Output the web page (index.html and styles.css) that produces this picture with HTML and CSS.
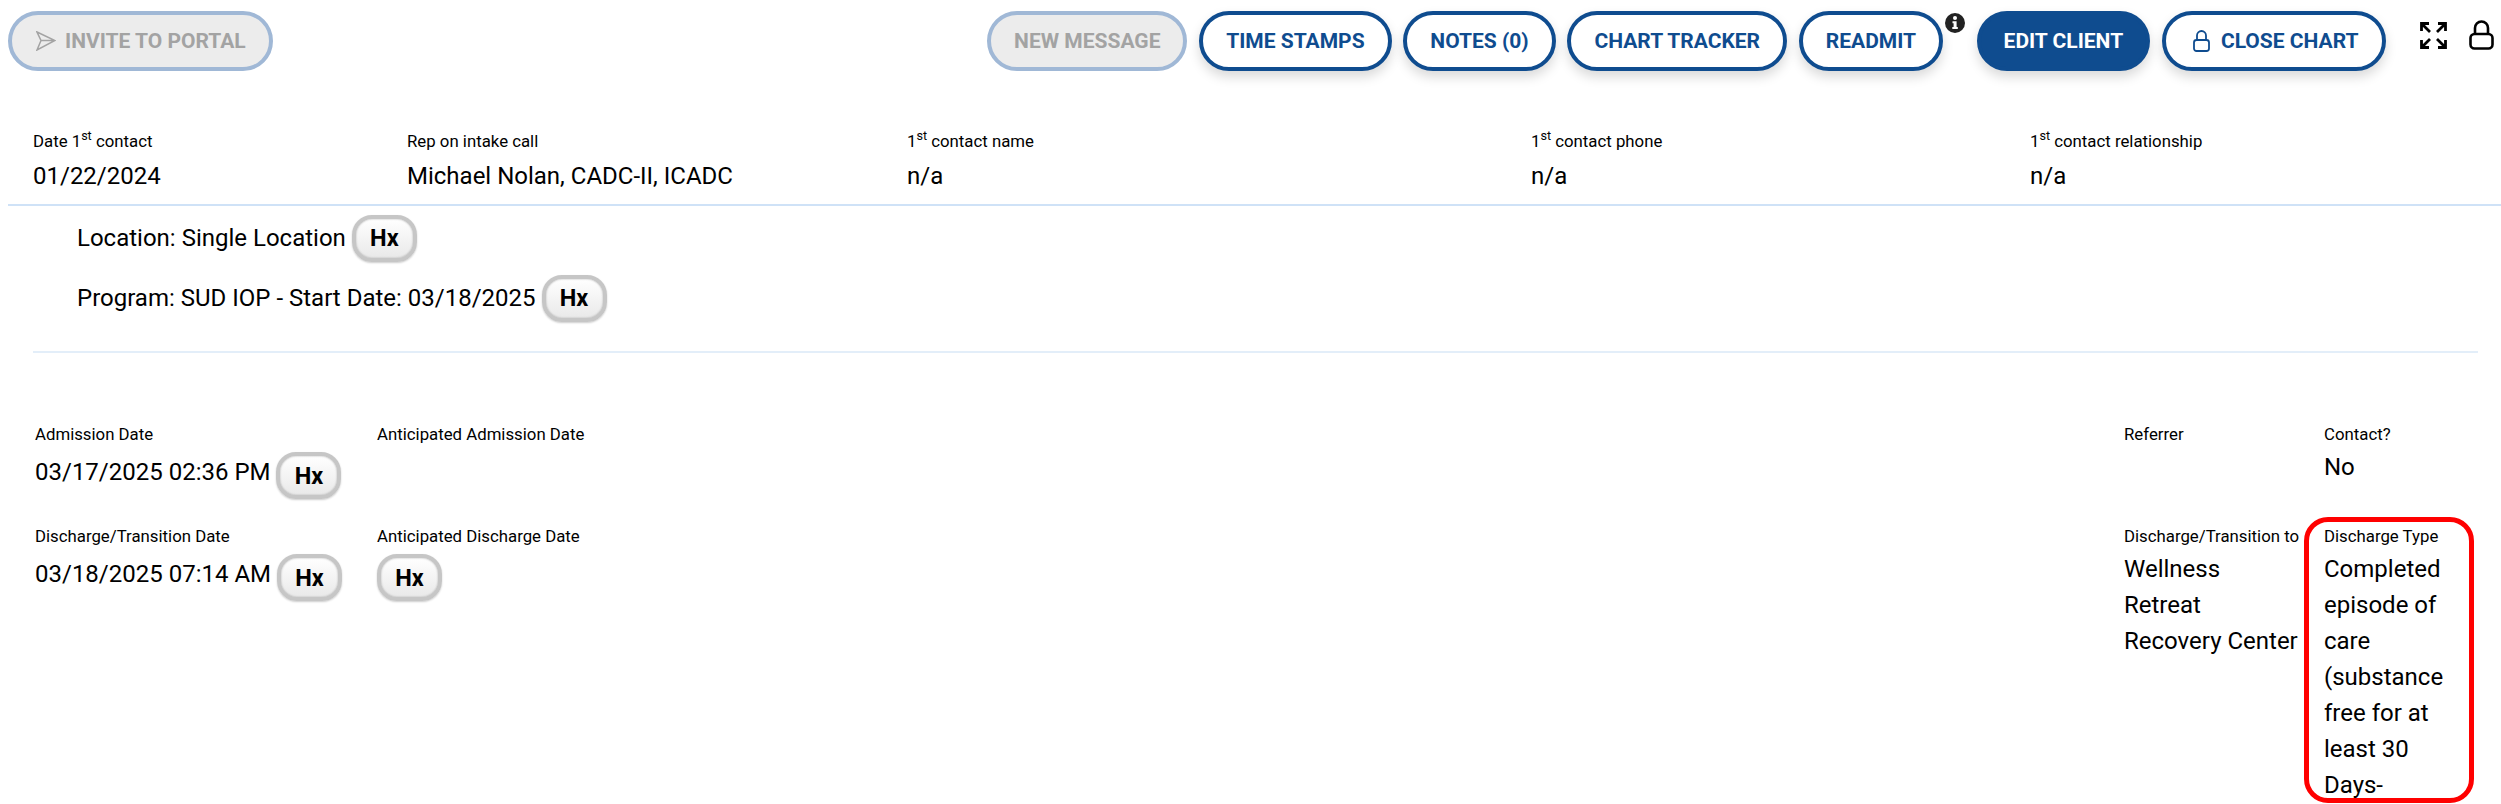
FILE: index.html
```html
<!DOCTYPE html>
<html lang="en">
<head>
    <meta charset="UTF-8">
    <meta name="viewport" content="width=device-width, initial-scale=1.0">
    <title>Client Chart</title>
    <link rel="stylesheet" href="styles.css">
</head>
<body>
    <div class="toolbar">
        <button class="pill pill-disabled">
            <svg class="send-icon" viewBox="0 0 20 20"><path d="M1 1 L19 9.5 L1 19 L5 9.5 Z M5 9.5 H19"/></svg>
            INVITE TO PORTAL
        </button>
        <div class="toolbar-right">
            <button class="pill pill-disabled">NEW MESSAGE</button>
            <button class="pill">TIME STAMPS</button>
            <button class="pill">NOTES (0)</button>
            <button class="pill">CHART TRACKER</button>
            <div class="readmit">
                <button class="pill">READMIT</button>
                <svg class="info-icon" viewBox="0 0 20 20">
                    <circle cx="10" cy="10" r="10" fill="#222"/>
                    <circle cx="10" cy="5" r="2" fill="#fff"/>
                    <path d="M7.5 8.2 H11.6 V14 H12.8 V16 H7.3 V14 H8.6 V10.2 H7.5 Z" fill="#fff"/>
                </svg>
            </div>
            <button class="pill pill-solid">EDIT CLIENT</button>
            <button class="pill">
                <svg class="lock-small" viewBox="0 0 17 22"><path d="M4 10 V5.5 a4.5 4.5 0 0 1 9 0 V10"/><rect x="1" y="10" width="15" height="11" rx="2.5"/></svg>
                CLOSE CHART
            </button>
            <svg class="expand-icon" viewBox="0 0 27 27">
                <path d="M1.5 9 V1.5 H9 M1.5 1.5 L10 10 M25.5 9 V1.5 H18 M25.5 1.5 L17 10 M1.5 18 V25.5 H9 M1.5 25.5 L10 17 M25.5 18 V25.5 H18 M25.5 25.5 L17 17"/>
            </svg>
            <svg class="lock-icon" viewBox="0 0 25 30"><path d="M6 14 V8 a6.5 6.5 0 0 1 13 0 V14"/><rect x="1.5" y="14" width="22" height="14.5" rx="4"/></svg>
        </div>
    </div>

    <div class="contact-row">
        <div>
            <div class="label">Date 1<sup>st</sup> contact</div>
            <div class="value">01/22/2024</div>
        </div>
        <div>
            <div class="label">Rep on intake call</div>
            <div class="value">Michael Nolan, CADC-II, ICADC</div>
        </div>
        <div>
            <div class="label">1<sup>st</sup> contact name</div>
            <div class="value">n/a</div>
        </div>
        <div>
            <div class="label">1<sup>st</sup> contact phone</div>
            <div class="value">n/a</div>
        </div>
        <div>
            <div class="label">1<sup>st</sup> contact relationship</div>
            <div class="value">n/a</div>
        </div>
    </div>

    <div class="programs">
        <div class="program-line">Location: Single Location<button class="hx">Hx</button></div>
        <div class="program-line">Program: SUD IOP - Start Date: 03/18/2025<button class="hx">Hx</button></div>
    </div>
    <hr class="divider">

    <div class="details">
        <div class="cell">
            <div class="label">Admission Date</div>
            <div class="value-hx"><span>03/17/2025 02:36 PM</span><button class="hx">Hx</button></div>
        </div>
        <div class="cell">
            <div class="label">Anticipated Admission Date</div>
        </div>
        <div class="cell">
            <div class="label">Referrer</div>
        </div>
        <div class="cell cell-last">
            <div class="label">Contact?</div>
            <div class="value">No</div>
        </div>

        <div class="cell">
            <div class="label">Discharge/Transition Date</div>
            <div class="value-hx"><span>03/18/2025 07:14 AM</span><button class="hx">Hx</button></div>
        </div>
        <div class="cell">
            <div class="label">Anticipated Discharge Date</div>
            <div class="value-hx"><button class="hx">Hx</button></div>
        </div>
        <div class="cell">
            <div class="label">Discharge/Transition to</div>
            <div class="value">Wellness<br>Retreat<br>Recovery Center</div>
        </div>
        <div class="cell cell-last cell-flagged">
            <div class="label">Discharge Type</div>
            <div class="value">Completed<br>episode of<br>care<br>(substance<br>free for at<br>least 30<br>Days-</div>
        </div>
    </div>
</body>
</html>
```

FILE: styles.css
```css
body {
    margin: 0;
    background-color: #fff;
    color: #000;
    font-family: Roboto, "Liberation Sans", sans-serif;
    overflow: hidden;
}

.toolbar {
    display: flex;
    justify-content: space-between;
    padding: 11px 7px 0 8px;
}

.toolbar-right {
    display: flex;
    align-items: flex-start;
    gap: 11.75px;
}

.pill {
    display: flex;
    align-items: center;
    gap: 8px;
    height: 60px;
    padding: 0 23px;
    background-color: #fff;
    color: #0f4c8f;
    border: 4px solid #0f4c8f;
    border-radius: 30px;
    font-family: inherit;
    font-size: 21px;
    font-weight: 700;
    box-shadow: 0 6px 12px rgba(0, 0, 0, 0.15);
}

.pill-disabled {
    background-color: #ececec;
    color: #a3a3a3;
    border-color: #a0b8d6;
    box-shadow: none;
}

.pill-solid {
    background-color: #0f4c8f;
    color: #fff;
}

.send-icon {
    width: 20px;
    height: 20px;
    margin: 0 1px;
    fill: none;
    stroke: #a3a3a3;
    stroke-width: 1.5;
}

.readmit {
    position: relative;
    margin-right: 21.75px;
}

.info-icon {
    position: absolute;
    top: 2px;
    right: -22px;
    width: 20px;
    height: 20px;
}

.lock-small {
    width: 17px;
    height: 22px;
    margin: 0 3px 0 4px;
    fill: none;
    stroke: #0f4c8f;
    stroke-width: 1.8;
}

.expand-icon {
    width: 27px;
    height: 27px;
    margin: 11px 0 0 22.75px;
    fill: none;
    stroke: #000;
    stroke-width: 2.8;
}

.lock-icon {
    width: 25px;
    height: 30px;
    margin: 9px 0 0 10.25px;
    fill: none;
    stroke: #000;
    stroke-width: 2.6;
}

.contact-row {
    display: grid;
    grid-template-columns: 374px 500px 624px 499px 1fr;
    margin: 60px 0 0 8px;
    padding: 0 0 10px 25px;
    border-bottom: 2px solid #cfe2f7;
}

.contact-row .value {
    margin-top: 7px;
}

.label {
    font-size: 16.8px;
    line-height: 20px;
}

sup {
    font-size: 12.6px;
    line-height: 0;
}

.value {
    margin-top: 5px;
    font-size: 24px;
    line-height: 36px;
}

.programs {
    padding: 2px 0 0 77px;
}

.program-line {
    display: flex;
    align-items: center;
    gap: 6px;
    height: 60px;
    font-size: 24px;
}

.hx {
    width: 65px;
    height: 47px;
    background: linear-gradient(#fff, #e9e9e9);
    color: #000;
    border: 4px solid #c6c6c6;
    border-radius: 20px;
    box-shadow: 0 1px 2px rgba(0, 0, 0, 0.2), inset 0 0 2px #aaa;
    font-family: inherit;
    font-size: 23.5px;
    font-weight: 700;
}

.divider {
    height: 2px;
    margin: 23px 23px 0 33px;
    background-color: #e3eef9;
    border: none;
}

.details {
    display: grid;
    grid-template-columns: 342px 1747px 180px 170px;
    grid-template-rows: 102px auto;
    margin-top: 62px;
    padding-left: 35px;
}

.cell {
    padding-top: 9px;
}

.cell-last {
    padding-left: 20px;
}

.cell-flagged {
    box-sizing: border-box;
    height: 286px;
    padding: 4px 0 0 15px;
    border: 5px solid #f00;
    border-radius: 24px;
}

.value-hx {
    display: flex;
    align-items: flex-start;
    gap: 6px;
    margin-top: 8px;
    font-size: 24px;
    line-height: 41px;
}
```
